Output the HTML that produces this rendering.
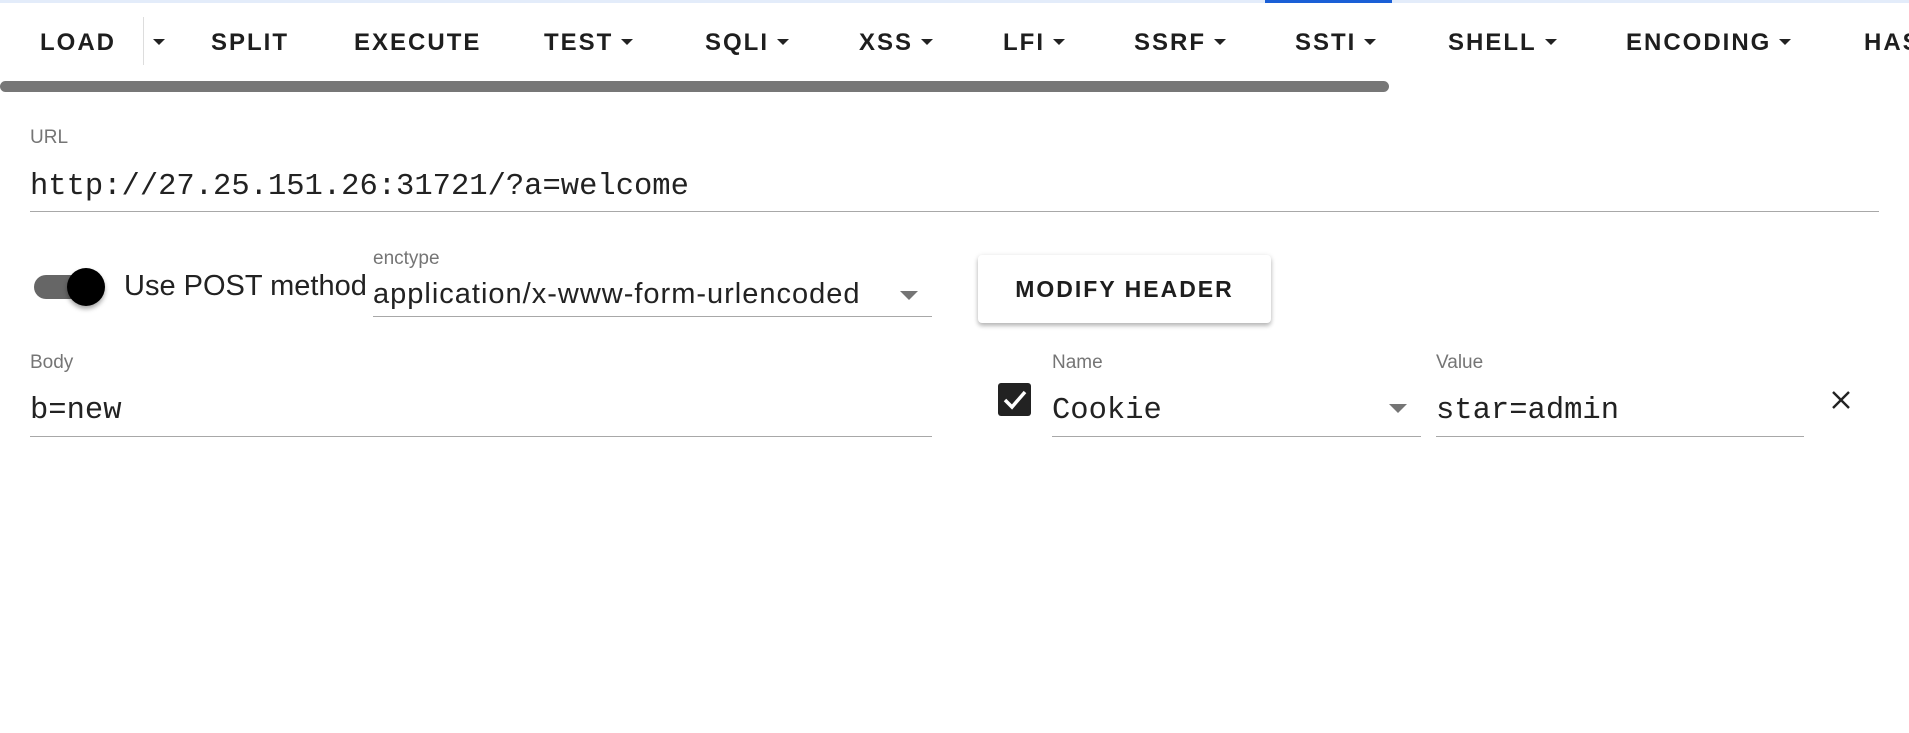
<!DOCTYPE html>
<html><head><meta charset="utf-8"><style>
*{margin:0;padding:0;box-sizing:border-box}
body{width:1909px;height:733px;background:#fff;position:relative;overflow:hidden;font-family:"Liberation Sans",sans-serif;color:#222}
.a{position:absolute;white-space:nowrap}
.nav{font-size:24px;font-weight:bold;letter-spacing:2px;color:#1e1e1e;top:29px;line-height:28px}
.tri{display:inline-block;width:0;height:0;border-left:6px solid transparent;border-right:6px solid transparent;border-top:6px solid #222;vertical-align:middle;margin-left:8px;position:relative;top:-2px}
.lbl{font-size:19px;color:#757575}
.mono{font-family:"Liberation Mono",monospace;font-size:30.5px;color:#222}
.line{position:absolute;height:1px;background:#a8a8a8}
.sel{position:absolute;width:0;height:0;border-left:9px solid transparent;border-right:9px solid transparent;border-top:9px solid #757575}
</style></head><body>
<div class="a" style="left:0;top:0;width:1909px;height:3px;background:#e3ecfa"></div>
<div class="a" style="left:1265px;top:0;width:127px;height:3px;background:#1a5fd6"></div>
<div class="a nav" style="left:40px">LOAD</div>
<div class="a" style="left:143px;top:17px;width:1px;height:48px;background:#ddd"></div>
<div class="a nav" style="left:145px"><span class="tri"></span></div>
<div class="a nav" style="left:211px">SPLIT</div>
<div class="a nav" style="left:354px">EXECUTE</div>
<div class="a nav" style="left:544px">TEST<span class="tri"></span></div>
<div class="a nav" style="left:705px">SQLI<span class="tri"></span></div>
<div class="a nav" style="left:859px">XSS<span class="tri"></span></div>
<div class="a nav" style="left:1003px">LFI<span class="tri"></span></div>
<div class="a nav" style="left:1134px">SSRF<span class="tri"></span></div>
<div class="a nav" style="left:1295px">SSTI<span class="tri"></span></div>
<div class="a nav" style="left:1448px">SHELL<span class="tri"></span></div>
<div class="a nav" style="left:1626px">ENCODING<span class="tri"></span></div>
<div class="a nav" style="left:1864px">HASH</div>
<div class="a" style="left:0;top:81px;width:1389px;height:11px;background:#777;border-radius:6px"></div>

<div class="a lbl" style="left:30px;top:127px">URL</div>
<div class="a mono" style="left:30px;top:170px">http://27.25.151.26:31721/?a=welcome</div>
<div class="line" style="left:30px;top:211px;width:1849px"></div>

<div class="a" style="left:34px;top:275px;width:62px;height:24px;border-radius:12px;background:#666"></div>
<div class="a" style="left:67px;top:268px;width:38px;height:38px;border-radius:50%;background:#000;box-shadow:0 3px 5px rgba(0,0,0,.35)"></div>
<div class="a" style="left:124px;top:270px;font-size:29px;color:#222">Use POST method</div>
<div class="a lbl" style="left:373px;top:248px">enctype</div>
<div class="a" style="left:373px;top:278px;font-size:29px;letter-spacing:1px;color:#222">application/x-www-form-urlencoded</div>
<div class="sel" style="left:900px;top:291px"></div>
<div class="line" style="left:373px;top:316px;width:559px"></div>

<div class="a" style="left:978px;top:255px;width:293px;height:68px;border-radius:4px;background:#fff;box-shadow:0 3px 4px rgba(0,0,0,.22),0 1px 6px rgba(0,0,0,.12);font-size:23px;font-weight:bold;letter-spacing:2px;text-align:center;line-height:68px;color:#1e1e1e">MODIFY HEADER</div>

<div class="a lbl" style="left:30px;top:352px">Body</div>
<div class="a mono" style="left:30px;top:394px">b=new</div>
<div class="line" style="left:30px;top:436px;width:902px"></div>

<div class="a" style="left:998px;top:383px;width:33px;height:33px;border-radius:3px;background:#222"></div>
<svg class="a" style="left:998px;top:383px" width="33" height="33" viewBox="0 0 33 33"><path d="M7 17 L14 24 L27 9" stroke="#fff" stroke-width="3.5" fill="none"/></svg>
<div class="a lbl" style="left:1052px;top:352px">Name</div>
<div class="a mono" style="left:1052px;top:394px">Cookie</div>
<div class="sel" style="left:1389px;top:404px"></div>
<div class="line" style="left:1052px;top:436px;width:369px"></div>
<div class="a lbl" style="left:1436px;top:352px">Value</div>
<div class="a mono" style="left:1436px;top:394px">star=admin</div>
<div class="line" style="left:1436px;top:436px;width:368px"></div>
<svg class="a" style="left:1831px;top:390px" width="20" height="20" viewBox="0 0 20 20"><path d="M2 2L18 18M18 2L2 18" stroke="#222" stroke-width="2.4"/></svg>
</body></html>
